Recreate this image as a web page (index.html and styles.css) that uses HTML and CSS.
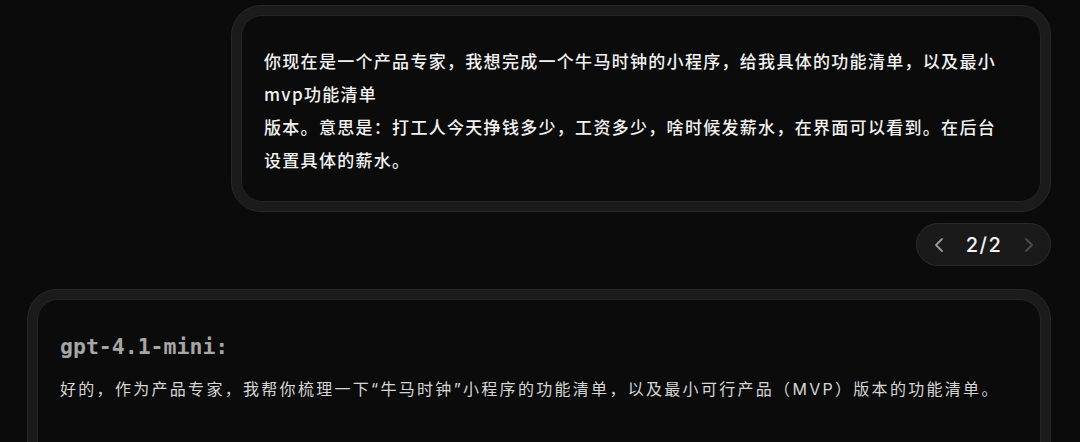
FILE: index.html
```html
<!DOCTYPE html>
<html lang="zh-CN">
<head>
  <meta charset="UTF-8" />
  <meta name="viewport" content="width=device-width, initial-scale=1.0"/>
  <title>牛马时钟 - 对话</title>
  <link rel="stylesheet" href="styles.css">
</head>

<body>
  <main class="chat">
    <!-- User message -->
    <div class="msg-row user-row">
      <div class="bubble user-bubble">
        <div class="bubble-inner">
          <p class="user-text">你现在是一个产品专家，我想完成一个牛马时钟的小程序，给我具体的功能清单，以及最小mvp功能清单<br>版本。意思是：打工人今天挣钱多少，工资多少，啥时候发薪水，在界面可以看到。在后台设置具体的薪水。</p>
        </div>
      </div>
    </div>

    <!-- Version switcher -->
    <div class="msg-row user-row">
      <div class="pager">
        <button class="pager-btn">
          <svg width="10" height="16" viewBox="0 0 10 16"><polyline points="8,2 2,8 8,14" fill="none" stroke="currentColor" stroke-width="1.8" stroke-linecap="round" stroke-linejoin="round"/></svg>
        </button>
        <span class="pager-count">2/2</span>
        <button class="pager-btn disabled">
          <svg width="10" height="16" viewBox="0 0 10 16"><polyline points="2,2 8,8 2,14" fill="none" stroke="currentColor" stroke-width="1.8" stroke-linecap="round" stroke-linejoin="round"/></svg>
        </button>
      </div>
    </div>

    <!-- Assistant message -->
    <div class="bubble bot-bubble">
      <div class="bubble-inner">
        <div class="model-name">gpt-4.1-mini:</div>
        <p class="bot-text">好的，作为产品专家，我帮你梳理一下“牛马时钟”小程序的功能清单，以及最小可行产品（MVP）版本的功能清单。</p>
      </div>
    </div>
  </main>
</body>
</html>
```

FILE: styles.css
```css
:root {
  --bg: #0b0b0b;
  --ring: #1b1b1b;
  --ring-edge: #282828;
  --inner-edge: #242424;
  --text: #f2f2f2;
  --text-soft: #d6d6d6;
  --muted: #a6a6a6;
}

body {
  margin: 0;
  background-color: var(--bg);
  color: var(--text);
  font-family: "Noto Sans CJK SC", "Noto Sans", sans-serif;
  overflow: hidden;
}

.chat {
  display: flex;
  flex-direction: column;
  padding: 5px 29px 0 27px;
}

.msg-row {
  display: flex;
}

.user-row {
  justify-content: flex-end;
}

/* Double-ring message bubble */
.bubble {
  background-color: var(--ring);
  border: 1px solid var(--ring-edge);
  border-radius: 30px;
  padding: 9px;
}

.bubble-inner {
  background-color: var(--bg);
  border: 1px solid var(--inner-edge);
  border-radius: 21px;
}

.user-bubble {
  width: 800px;
}

.user-bubble .bubble-inner {
  padding: 28px 36px 25px 22px;
}

.user-text {
  margin: 0;
  font-size: 17px;
  font-weight: 500;
  line-height: 33px;
  letter-spacing: 1.3px;
  color: var(--text);
}

/* Pager */
.pager {
  margin-top: 11px;
  width: 135px;
  height: 43px;
  box-sizing: border-box;
  display: flex;
  align-items: center;
  justify-content: space-between;
  padding: 0 16px 0 17px;
  background-color: #1a1a1a;
  border: 1px solid #2a2a2a;
  border-radius: 22px;
}

.pager-btn {
  background: transparent;
  border: none;
  padding: 0;
  display: flex;
  align-items: center;
  color: #9a9a9a;
  cursor: pointer;
}

.pager-btn.disabled {
  color: #4c4c4c;
}

.pager-count {
  font-family: "Inter", "Noto Sans", sans-serif;
  font-size: 20px;
  font-weight: 500;
  letter-spacing: 1.5px;
  color: var(--text);
}

.bot-bubble {
  margin-top: 23px;
}

.bot-bubble .bubble-inner {
  padding: 33px 22px 60px 22px;
}

.model-name {
  font-family: "DejaVu Sans Mono", "Liberation Mono", monospace;
  font-weight: bold;
  font-size: 21.5px;
  line-height: 28px;
  color: var(--muted);
}

.bot-text {
  margin: 12px 0 0 0;
  font-family: "Inter", "Noto Sans CJK SC", sans-serif;
  font-size: 16px;
  line-height: 33px;
  letter-spacing: 2.3px;
  color: var(--text-soft);
}
```
